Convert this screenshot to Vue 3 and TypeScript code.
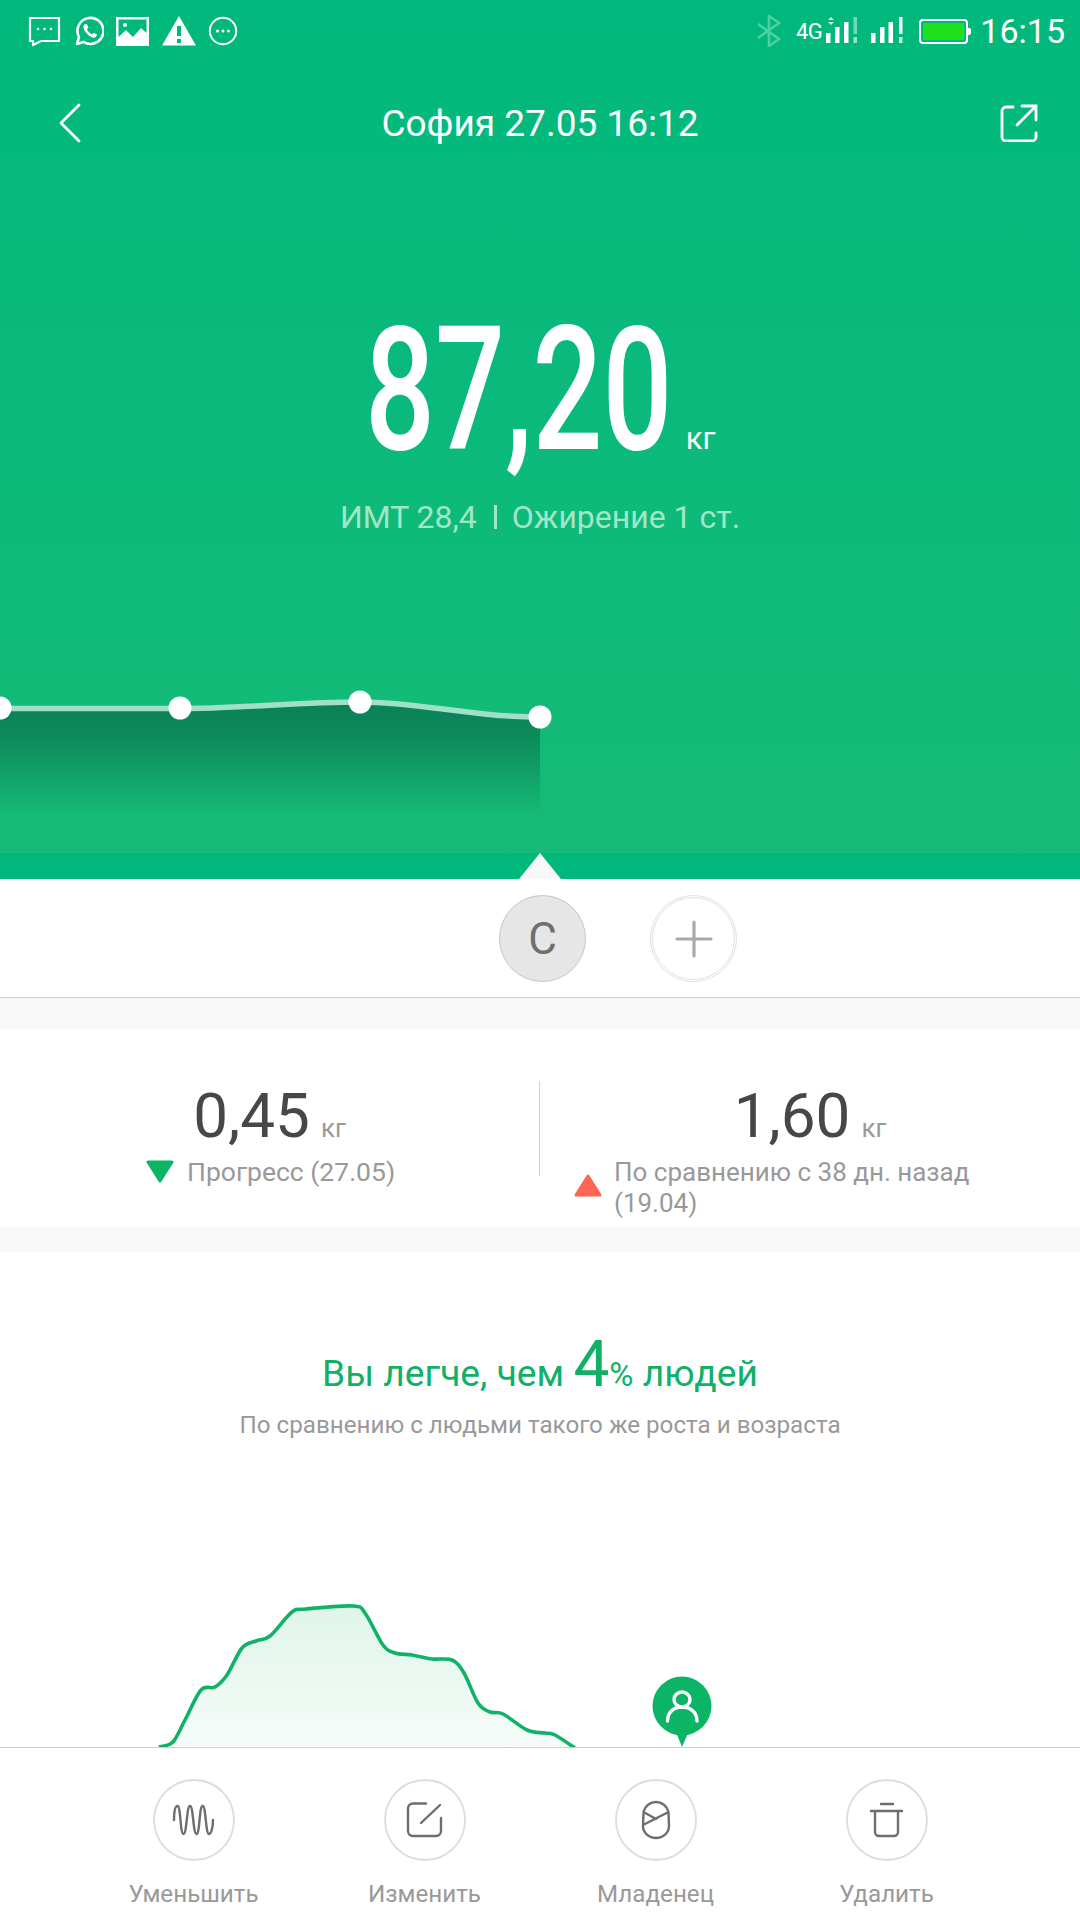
<script setup lang="ts">
type Pt = [number, number]

// кривая распределения, точки сняты с графика
const distPoints: Pt[] = [
  [159, 1747], [173, 1742], [185, 1720], [201, 1690], [215, 1687], [227, 1675], [242, 1648], [256, 1641],
  [270, 1636], [292, 1612], [306, 1609], [353, 1606], [365, 1613], [383, 1645], [395, 1653], [412, 1655],
  [432, 1659], [452, 1660], [464, 1673], [478, 1703], [490, 1712], [503, 1714], [527, 1730], [545, 1733],
  [555, 1735], [575, 1748],
]

function smooth(pts: Pt[]): string {
  let d = `M${pts[0][0]} ${pts[0][1]}`
  for (let i = 0; i < pts.length - 1; i++) {
    const p0 = pts[Math.max(i - 1, 0)]
    const p1 = pts[i]
    const p2 = pts[i + 1]
    const p3 = pts[Math.min(i + 2, pts.length - 1)]
    const c1x = p1[0] + (p2[0] - p0[0]) / 6
    const c1y = p1[1] + (p2[1] - p0[1]) / 6
    const c2x = p2[0] - (p3[0] - p1[0]) / 6
    const c2y = p2[1] - (p3[1] - p1[1]) / 6
    d += ` C${c1x.toFixed(1)} ${c1y.toFixed(1)} ${c2x.toFixed(1)} ${c2y.toFixed(1)} ${p2[0]} ${p2[1]}`
  }
  return d
}

const distLine = smooth(distPoints)
const distArea = `${distLine} L575 1750 L159 1750 Z`

const trendLine = 'M0 708.5 L180 708.5 C240 708.5 300 702 360 702 C420 702 470 717 540 717'
const trendArea = `${trendLine} L540 815 L0 815 Z`
const trendDots: Pt[] = [[0, 708], [180, 708], [360, 702], [540, 717]]

const actions = [
  { label: 'Уменьшить', icon: 'M21 41C21 31 22 27 24.5 27C28 27 27 55 30.5 55C34 55 33.5 27 37 27C40.5 27 40 55 43.5 55C47 55 46 27 49.7 27C53 27 52.5 55 56 55C58.5 55 60 47 60 41' },
  { label: 'Изменить', icon: 'M42 24.5H29a5 5 0 0 0-5 5V52a5 5 0 0 0 5 5H52a5 5 0 0 0 5-5V39M37 44L56 26' },
  { label: 'Младенец', icon: 'M28.500 33C30 27 35 23 41 23C47 23 52 27 53.500 33L54 47C54 54 48 59 41 59C34 59 28 54 28 47ZM53.500 33L28 46M28.500 33L41 40' },
  { label: 'Удалить', icon: 'M25 32H56M29 32V53a4 4 0 0 0 4 4H48a4 4 0 0 0 4-4V32M35 25H47' },
]
</script>

<template>
  <div class="page">
    <section class="hero">
      <div class="hero-main">
        <svg class="trend" width="1080" height="173" viewBox="0 680 1080 173">
          <defs>
            <linearGradient id="trendFill" x1="0" y1="0" x2="0" y2="1">
              <stop offset="0" stop-color="#0b7f57" />
              <stop offset="0.3" stop-color="#0d8a5b" />
              <stop offset="1" stop-color="#16ba78" />
            </linearGradient>
          </defs>
          <path :d="trendArea" fill="url(#trendFill)" />
          <path :d="trendLine" fill="none" stroke="#a0e0c7" stroke-width="5.500" />
          <circle v-for="d in trendDots" :key="d[0]" :cx="d[0]" :cy="d[1]" r="11.5" fill="#fff" />
        </svg>

        <header class="status-bar">
          <div class="status-left">
            <svg width="34" height="32" viewBox="0 0 34 32" fill="none">
              <path d="M3 3H32V26H14L6 30V26H3Z" stroke="#fff" stroke-width="2.2" stroke-linejoin="round" />
              <circle cx="11" cy="14" r="1.3" fill="#fff" /><circle cx="17.5" cy="14" r="1.3" fill="#fff" /><circle cx="24" cy="14" r="1.3" fill="#fff" />
            </svg>
            <svg width="30" height="30" viewBox="0 0 30 30" fill="none">
              <path d="M3 28L5 21A13 13 0 1 1 9.6 25.9Z" stroke="#fff" stroke-width="2.6" stroke-linejoin="round" />
              <path d="M10.5 8.5C9 10 9 12.5 11.5 16S17 21.5 19.5 21.8C21.5 22 23 20 23 18.6L19.6 16.8L18 18.4C16 17.6 13.8 15.4 13 13.2L14.4 11.6L12.8 8Z" fill="#fff" />
            </svg>
            <svg width="33" height="30" viewBox="0 0 33 30">
              <path fill="#fff" fill-rule="evenodd" d="M0 1H33V30H0ZM2.5 3.5V21L10 14L17 21L25 12L30.500 17V3.500Z" />
              <circle cx="9" cy="9" r="2" fill="#fff" />
            </svg>
            <svg width="34" height="30" viewBox="0 0 34 30">
              <path fill="#fff" fill-rule="evenodd" d="M17 0L34 29.500H0ZM15 10V20H19V10ZM15 23V27H19V23Z" />
            </svg>
            <svg width="30" height="30" viewBox="0 0 30 30" fill="none">
              <circle cx="15" cy="15" r="13.200" stroke="#fff" stroke-width="2" />
              <circle cx="9.500" cy="15" r="1.500" fill="#fff" /><circle cx="15" cy="15" r="1.500" fill="#fff" /><circle cx="20.500" cy="15" r="1.500" fill="#fff" />
            </svg>
          </div>
          <div class="status-right">
            <svg class="bt" width="24" height="32" viewBox="0 0 24 32" fill="none">
              <path d="M1 9L22 24L12 31V1L22 8L1 23" stroke="#fff" stroke-opacity=".3" stroke-width="2.600" />
            </svg>
            <svg class="signal" width="112" height="30" viewBox="0 0 112 30">
              <text x="0" y="23" font-family="Roboto, sans-serif" font-size="22" letter-spacing="-.5" fill="#fff">4G</text>
              <path d="M32 4L35 1L38 4ZM32 6L35 9L38 6Z" fill="#fff" opacity=".8" />
              <rect x="30" y="17" width="4.500" height="10" fill="#fff" />
              <rect x="39" y="11" width="4.500" height="16" fill="#fff" />
              <rect x="48" y="6" width="4.500" height="21" fill="#fff" />
              <rect x="57.500" y="1" width="3.500" height="17" fill="#fff" opacity=".45" />
              <rect x="57.500" y="21" width="3.500" height="6" fill="#fff" opacity=".6" />
              <rect x="75" y="17" width="4.500" height="10" fill="#fff" />
              <rect x="84" y="11" width="4.500" height="16" fill="#fff" />
              <rect x="92.500" y="6" width="4.500" height="21" fill="#fff" />
              <rect x="103" y="1" width="3.500" height="17" fill="#fff" />
              <rect x="103" y="21" width="3.500" height="6" fill="#fff" opacity=".8" />
            </svg>
            <div class="battery"><span class="battery-fill"></span></div>
            <span class="clock">16:15</span>
          </div>
        </header>

        <nav class="nav">
          <svg width="22" height="40" viewBox="0 0 22 40" fill="none">
            <path d="M20 2L2 20L20 38" stroke="#fff" stroke-width="2.800" stroke-linecap="round" stroke-linejoin="round" />
          </svg>
          <h1 class="nav-title">София 27.05 16:12</h1>
          <svg width="38" height="38" viewBox="0 0 38 38" fill="none">
            <path d="M13 3H6a4 4 0 0 0-4 4V33a4 4 0 0 0 4 4H32a4 4 0 0 0 4-4V29" stroke="#fff" stroke-width="2.800" stroke-linecap="round" />
            <path d="M17 21L36 2M22 2H36V16" stroke="#fff" stroke-width="2.800" stroke-linecap="round" />
          </svg>
        </nav>

        <div class="weight">
          <span class="weight-value">87,20</span>
          <span class="weight-unit">кг</span>
        </div>
        <p class="bmi">ИМТ 28,4<i class="bmi-sep"></i>Ожирение 1 ст.</p>
      </div>
      <div class="hero-band"><span class="caret"></span></div>
    </section>

    <section class="users">
      <div class="avatar">С</div>
      <div class="avatar-add">
        <svg width="38" height="38" viewBox="0 0 38 38"><path d="M19 2V36M2 19H36" stroke="#aaa" stroke-width="3.200" stroke-linecap="round" /></svg>
      </div>
    </section>

    <section class="stats">
      <div class="stat">
        <div class="stat-num">0,45<small>кг</small></div>
        <div class="stat-note stat-note-left">
          <svg width="28" height="23" viewBox="0 0 28 23"><path d="M2 2H26L14 21Z" fill="#0bb565" stroke="#0bb565" stroke-width="3" stroke-linejoin="round" /></svg>
          <span>Прогресс (27.05)</span>
        </div>
      </div>
      <i class="stat-divider"></i>
      <div class="stat">
        <div class="stat-num">1,60<small>кг</small></div>
        <div class="stat-note stat-note-right">
          <svg width="28" height="23" viewBox="0 0 28 23"><path d="M2 21H26L14 2Z" fill="#ff6553" stroke="#ff6553" stroke-width="3" stroke-linejoin="round" /></svg>
          <span>По сравнению с 38 дн. назад<br />(19.04)</span>
        </div>
      </div>
    </section>

    <section class="dist">
      <h2 class="dist-title">Вы легче, чем <b>4</b><em>%</em> людей</h2>
      <p class="dist-sub">По сравнению с людьми такого же роста и возраста</p>
      <svg class="dist-chart" width="1080" height="157" viewBox="0 1590 1080 157">
        <defs>
          <linearGradient id="distFill" x1="0" y1="0" x2="0" y2="1">
            <stop offset="0" stop-color="#e0f5ea" />
            <stop offset="1" stop-color="#f6fcf9" />
          </linearGradient>
        </defs>
        <path :d="distArea" fill="url(#distFill)" />
        <path :d="distLine" fill="none" stroke="#10b268" stroke-width="3.600" />
        <path d="M675.500 1731L682 1747L689 1731Z" fill="#0bb565" />
        <circle cx="682" cy="1706" r="29.500" fill="#0bb565" />
        <ellipse cx="682" cy="1699.500" rx="8" ry="7.500" fill="none" stroke="#fff" stroke-width="3.400" />
        <path d="M667.500 1721C667.500 1712 674 1707 682 1707S697 1712 697 1721" fill="none" stroke="#fff" stroke-width="3.400" stroke-linecap="round" />
      </svg>
    </section>

    <footer class="actions">
      <div v-for="a in actions" :key="a.label" class="action">
        <svg width="82" height="82" viewBox="0 0 82 82" fill="none">
          <circle cx="41" cy="41" r="40" stroke="#dcdcdc" stroke-width="1.800" />
          <path :d="a.icon" stroke="#6e6e6e" stroke-width="2.400" stroke-linecap="round" stroke-linejoin="round" />
        </svg>
        <span class="action-label">{{ a.label }}</span>
      </div>
    </footer>
  </div>
</template>

<style>
html, body { margin: 0; background: #fff; }
</style>

<style scoped>
.page {
  width: 1080px; height: 1920px; display: flex; flex-direction: column; overflow: hidden;
  background: #f8f8f8; font-family: Roboto, "Noto Sans", sans-serif; color: #474747;
}

.hero { height: 879px; flex: none; display: flex; flex-direction: column; background: #00b87c; color: #fff; }
.hero-main { height: 853px; flex: none; position: relative; background: linear-gradient(180deg, #00b87c 0%, #0cba7b 55%, #17ba76 100%); }
.trend { position: absolute; left: 0; bottom: 0; }
.hero-band { height: 26px; flex: none; position: relative; }
.caret {
  position: absolute; left: 519px; bottom: 0; width: 42px; height: 26px; background: #f8f8f8;
  clip-path: polygon(50% 0, 100% 100%, 0 100%);
}

.status-bar { position: relative; height: 64px; padding: 15px 15px 0 27px; box-sizing: border-box; display: flex; justify-content: space-between; align-items: flex-start; }
.status-left { display: flex; align-items: center; gap: 12.6px; height: 32px; }
.status-right { display: flex; align-items: center; height: 32px; }
.bt { margin-right: 15px; }
.signal { margin-right: 11px; }
.battery { width: 49px; height: 25px; box-sizing: border-box; border: 2px solid #fff; border-radius: 4px; padding: 2px; position: relative; margin-right: 12px; }
.battery::after { content: ''; position: absolute; right: -5px; top: 7px; width: 3px; height: 7px; background: #fff; border-radius: 0 2px 2px 0; }
.battery-fill { display: block; height: 100%; background: #1fe01c; }
.clock { font-size: 34px; line-height: 32px; }

.nav { position: relative; height: 118px; padding: 0 42px 0 59px; display: flex; align-items: center; justify-content: space-between; }
.nav-title { margin: 0; font-size: 37px; font-weight: 400; position: absolute; left: 0; right: 0; text-align: center; }

.weight { position: relative; margin-top: 122px; display: flex; justify-content: center; align-items: baseline; padding-left: 1px; }
.weight-value {
  font-size: 172px; line-height: 172px; font-weight: 500; display: inline-block;
  transform: scaleX(.716); transform-origin: left; margin-right: -109px;
}
.weight-unit { font-size: 31px; font-weight: 400; }

.bmi { position: relative; margin: 21px 0 0; text-align: center; font-size: 32px; line-height: 40px; color: #a2e6c8; display: flex; justify-content: center; align-items: center; }
.bmi-sep { width: 3px; height: 24px; background: #a2e6c8; margin: 0 15px 0 17px; }

.users { height: 119px; flex: none; box-sizing: border-box; background: #fff; border-bottom: 1px solid #c9c9c9; display: flex; align-items: center; gap: 64px; padding: 1px 0 0 499px; }
.avatar {
  width: 87px; height: 87px; box-sizing: border-box; border-radius: 50%; background: #e6e6e6; border: 1px solid #c6c6c6;
  display: flex; align-items: center; justify-content: center; font-size: 44px; color: #6f6f6f;
}
.avatar-add {
  width: 87px; height: 87px; box-sizing: border-box; border-radius: 50%; border: 3.500px double #e0e0e0;
  display: flex; align-items: center; justify-content: center;
}

.stats { margin-top: 32px; height: 197px; flex: none; background: #fff; display: flex; position: relative; }
.stat { flex: 1; min-width: 0; display: flex; flex-direction: column; align-items: center; padding-top: 60px; }
.stat:first-child { flex: none; width: 539px; }
.stat-num { font-size: 62px; line-height: 52px; color: #474747; }
.stat-num small { font-size: 26px; color: #999; margin-left: 11px; }
.stat-divider { width: 1px; height: 95px; background: #cfcfcf; margin-top: 51px; flex: none; }
.stat-note { display: flex; align-items: center; gap: 12px; font-size: 26px; line-height: 30.5px; color: #999; margin-top: 3px; }
.stat-note-left { align-self: flex-start; margin-left: 146px; align-items: flex-start; font-size: 26.5px; }
.stat-note-left span { margin-left: 1px; }
.stat-note-left svg { margin-top: 3px; }
.stat-note-right { align-self: flex-start; margin-left: 34px; }
.stat-note-right svg { margin-top: -4px; }

.dist { flex: 1; min-height: 0; margin-top: 25px; background: #fff; display: flex; flex-direction: column; align-items: center; }
.dist-title { margin: 89px 0 0; font-size: 37.2px; line-height: 64px; font-weight: 400; color: #10b066; }
.dist-title b { font-size: 64px; font-weight: 400; line-height: 40px; }
.dist-title em { font-style: normal; font-size: 33px; }
.dist-sub { margin: 1px 0 0; font-size: 24.2px; line-height: 34px; color: #999; }
.dist-chart { display: block; margin-top: auto; flex: none; }

.actions { height: 173px; flex: none; box-sizing: border-box; background: #fff; border-top: 1px solid #cfcfcf; display: grid; grid-template-columns: repeat(4, 231px); padding: 31px 0 0 78px; }
.action { display: flex; flex-direction: column; align-items: center; }
.action-label { margin-top: 16px; font-size: 24.2px; line-height: 34px; color: #999; }
</style>
